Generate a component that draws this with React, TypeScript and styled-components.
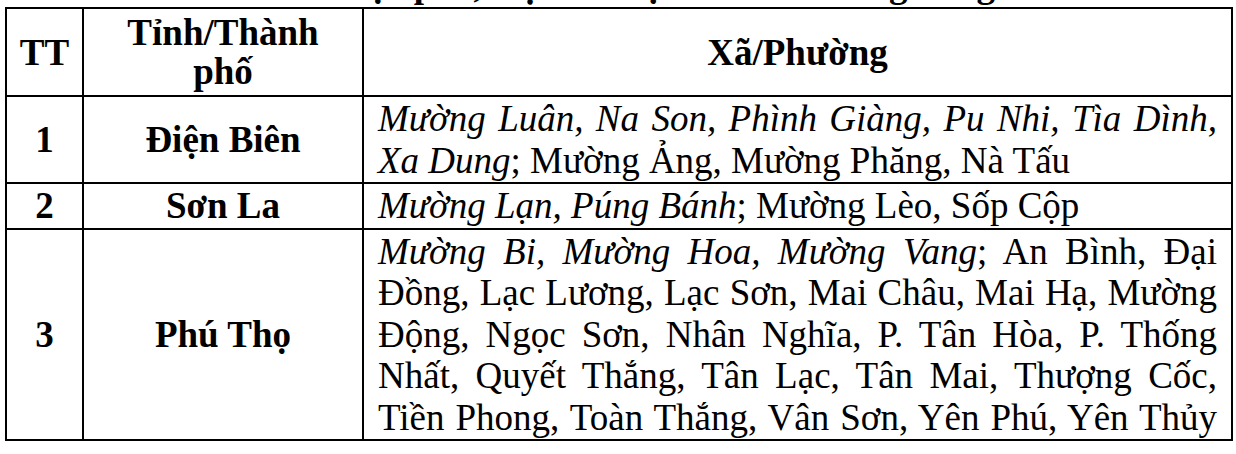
import styled, { createGlobalStyle } from "styled-components";

const GlobalStyle = createGlobalStyle`
    html, body {
        margin: 0;
        padding: 0;
        background: #fff;
    }
    body {
        font-family: "Liberation Serif", "Times New Roman", serif;
        color: #000;
    }
`;

const Page = styled.div`
    width: 1236px;
    height: 454px;
    padding: 0 5px;
    box-sizing: border-box;
    overflow: hidden;
`;

// tiêu đề bị cắt, chỉ còn thấy phần chân chữ
const TitleClip = styled.div`
    height: 7px;
    overflow: hidden;
    display: flex;
    align-items: flex-end;
    justify-content: center;
`;

const Title = styled.div`
    font-weight: bold;
    font-size: 37px;
    line-height: 1.15;
    white-space: nowrap;
`;

const Table = styled.table`
    width: 1226px;
    border-collapse: collapse;
    table-layout: fixed;
    border: 2px solid #000;
`;

const Col = styled.col<{ $w: number }>`
    width: ${(p) => p.$w}px;
`;

const Th = styled.th`
    border: 2px solid #000;
    font-weight: bold;
    font-size: 37px;
    line-height: 39px;
    padding: 4px 6px;
    text-align: center;
    vertical-align: middle;
`;

const Td = styled.td<{ $bold?: boolean }>`
    border: 2px solid #000;
    font-size: 37px;
    font-weight: ${(p) => (p.$bold ? "bold" : "normal")};
    line-height: 41px;
    padding: 0 6px;
    text-align: center;
    vertical-align: middle;
`;

const ListCell = styled.td<{ $fill?: boolean }>`
    border: 2px solid #000;
    font-size: 37px;
    line-height: 41.5px;
    padding: 1px 14px;
    text-align: justify;
    text-align-last: ${(p) => (p.$fill ? "justify" : "auto")};
    vertical-align: middle;
`;

const It = styled.i`
    font-style: italic;
`;

type Row = {
    no: number;
    province: string;
    italic: string;
    plain: string;
    fill?: boolean;
};

const rows: Row[] = [
    {
        no: 1,
        province: "Điện Biên",
        italic: "Mường Luân, Na Son, Phình Giàng, Pu Nhi, Tìa Dình, Xa Dung",
        plain: "Mường Ảng, Mường Phăng, Nà Tấu",
    },
    {
        no: 2,
        province: "Sơn La",
        italic: "Mường Lạn, Púng Bánh",
        plain: "Mường Lèo, Sốp Cộp",
    },
    {
        no: 3,
        province: "Phú Thọ",
        italic: "Mường Bi, Mường Hoa, Mường Vang",
        plain:
            "An Bình, Đại Đồng, Lạc Lương, Lạc Sơn, Mai Châu, Mai Hạ, Mường Động, Ngọc Sơn, Nhân Nghĩa, P. Tân Hòa, P. Thống Nhất, Quyết Thắng, Tân Lạc, Tân Mai, Thượng Cốc, Tiền Phong, Toàn Thắng, Vân Sơn, Yên Phú, Yên Thủy",
        fill: true,
    },
];

export default function App() {
    return (
        <Page>
            <GlobalStyle />
            <TitleClip>
                <Title>Danh mục phố, thị xã thuộc các tỉnh trong vùng</Title>
            </TitleClip>
            <Table>
                <colgroup>
                    <Col $w={77} />
                    <Col $w={280} />
                    <Col $w={869} />
                </colgroup>
                <thead>
                    <tr>
                        <Th>TT</Th>
                        <Th>
                            Tỉnh/Thành
                            <br />
                            phố
                        </Th>
                        <Th>Xã/Phường</Th>
                    </tr>
                </thead>
                <tbody>
                    {rows.map((r) => (
                        <tr key={r.no}>
                            <Td $bold>{r.no}</Td>
                            <Td $bold>{r.province}</Td>
                            <ListCell $fill={r.fill}>
                                <It>{r.italic}</It>; {r.plain}
                            </ListCell>
                        </tr>
                    ))}
                </tbody>
            </Table>
        </Page>
    );
}
